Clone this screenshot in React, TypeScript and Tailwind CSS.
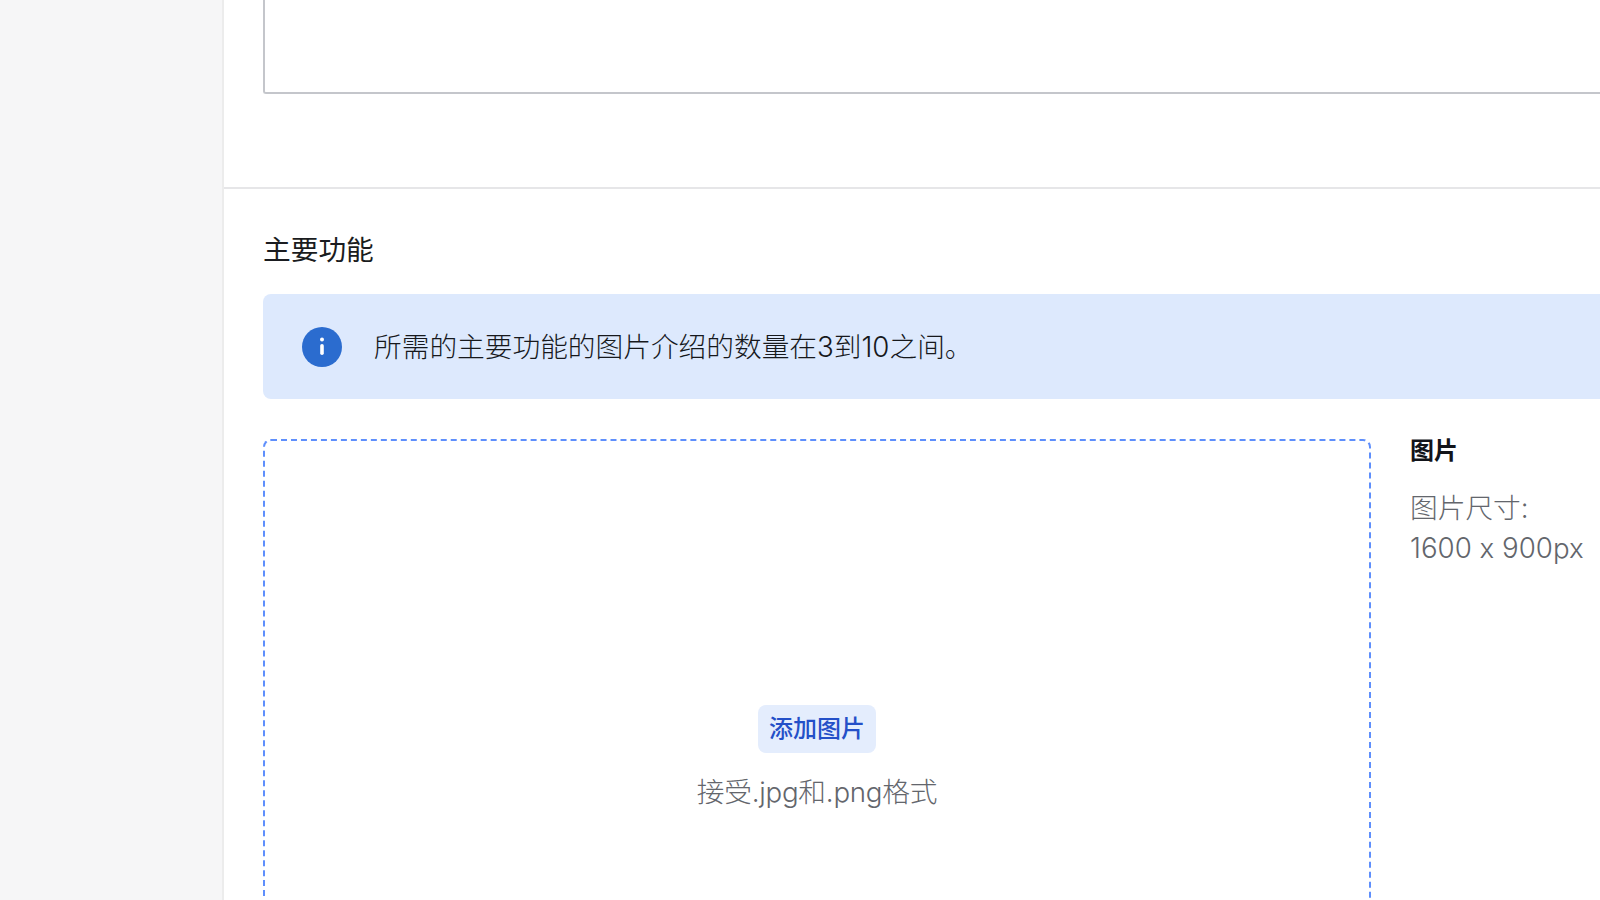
import React from 'react';

const fontStack = "font-['Inter','Noto_Sans_CJK_SC',sans-serif]";

const InfoIcon = () => (
  <svg width="40" height="40" viewBox="0 0 40 40" className="shrink-0">
    <circle cx="20" cy="20" r="20" fill="#2b6ccf" />
    <circle cx="20" cy="12.5" r="2" fill="#ffffff" />
    <rect x="18.2" y="17" width="3.6" height="11" rx="1.8" fill="#ffffff" />
  </svg>
);

export default function App() {
  return (
    <div className={`flex h-[900px] w-[1600px] overflow-hidden bg-white ${fontStack}`}>
      {/* Sidebar */}
      <div className="h-full w-[224px] shrink-0 border-r-2 border-[#ececec] bg-[#f6f6f7]" />

      <div className="flex min-w-0 flex-1 flex-col">
        {/* Description box, cut off by the top of the page */}
        <div className="border-b-2 border-[#e6e6e8] pb-[93px] pl-[39px]">
          <div className="h-[94px] rounded-bl-[3px] border-b-2 border-l-2 border-[#c4c6cb]" />
        </div>

        {/* Main features */}
        <div className="pl-[39px] pt-[41px]">
          <h2 className="text-[27.7px] font-normal leading-[40px] text-[#1a1c20]">主要功能</h2>

          <div className="mt-[24px] flex h-[105px] items-center gap-[32px] rounded-l-[8px] bg-[#dde9fd] pl-[39px]">
            <InfoIcon />
            <p className="text-[27.7px] font-light leading-[40px] text-[#16181c]">
              所需的主要功能的图片介绍的数量在3到10之间。
            </p>
          </div>

          <div className="mt-[40px] flex gap-[39px]">
            <div className="flex h-[600px] w-[1108px] shrink-0 flex-col items-center rounded-[8px] border-2 border-dashed border-[#5f8ffc] pt-[264px]">
              <button className="h-[48px] w-[118px] rounded-[8px] bg-[#e4edfd] text-[24px] font-medium text-[#2450c8]">
                添加图片
              </button>
              <p className="mt-[19px] text-[27.7px] font-light leading-[40px] tracking-[-0.25px] text-[#63666c]">
                接受.jpg和.png格式
              </p>
            </div>

            <div className="min-w-0 flex-1">
              <h3 className="text-[24px] font-bold leading-[24px] text-[#12141a]">图片</h3>
              <p className="mt-[25px] text-[27.7px] font-light leading-[40px] text-[#63666c]">
                图片尺寸:
                <br />
                1600 x 900px
              </p>
            </div>
          </div>
        </div>
      </div>
    </div>
  );
}
